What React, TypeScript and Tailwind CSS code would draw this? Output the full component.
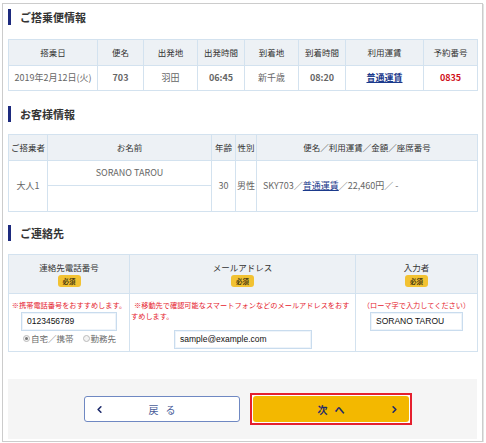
import React from 'react';
import { ChevronLeft, ChevronRight } from 'lucide-react';

const jp = "font-['Noto_Sans_CJK_JP',sans-serif]";
const cellBorder = 'border border-[#d3e2ef]';
const th = `${cellBorder} bg-[#edf1f5] text-center align-middle text-[8.5px] font-normal text-[#333] p-0`;
const td = `${cellBorder} bg-white text-center align-middle text-[9px] text-[#666] p-0`;

const SectionTitle: React.FC<{ label: string }> = ({ label }) => (
  <div className="flex items-center h-[16px] gap-[9px]">
    <span className="w-[3px] h-[16px] bg-[#1d2a7e]" />
    <h2 className="text-[11px] font-bold text-[#333] leading-none">{label}</h2>
  </div>
);

const Required = () => (
  <span className="inline-block rounded-[3px] bg-[#f2c232] px-[5px] text-[6.5px] font-bold leading-[12px] text-[#4a3a10]">
    必須
  </span>
);

const Radio: React.FC<{ checked?: boolean; label: string }> = ({ checked, label }) => (
  <span className="flex items-center gap-[1px]">
    <span className="flex items-center justify-center w-[7px] h-[7px] rounded-full border border-[#bbb] bg-[#f3f3f3]">
      {checked && <span className="w-[3px] h-[3px] rounded-full bg-[#777]" />}
    </span>
    <span>{label}</span>
  </span>
);

const TextBox: React.FC<{ value: string; w: string }> = ({ value, w }) => (
  <div
    className={`${w} h-[19px] mx-auto border border-[#c9dcee] shadow-[inset_0_0_0_1px_#eef4fa] bg-white text-left pl-[5px] flex items-center font-['Liberation_Sans',sans-serif] text-[8.5px] text-[#111]`}
  >
    {value}
  </div>
);

export default function App() {
  return (
    <div className={`${jp} pt-[3px] pl-[2px]`}>
      <div className="w-[481px] h-[439px] border border-[#cccccc] shadow-[1px_1px_0_#e4e4e4] bg-white px-[5px] pt-[5px]">
        <SectionTitle label="ご搭乗便情報" />
        <table className="mt-[14px] w-[469px] table-fixed border-collapse">
          <colgroup>
            <col className="w-[89px]" />
            <col className="w-[46px]" />
            <col className="w-[54px]" />
            <col className="w-[47px]" />
            <col className="w-[54px]" />
            <col className="w-[47px]" />
            <col className="w-[78px]" />
            <col className="w-[54px]" />
          </colgroup>
          <thead>
            <tr className="h-[26px]">
              {['搭乗日', '便名', '出発地', '出発時間', '到着地', '到着時間', '利用運賃', '予約番号'].map(h => (
                <th key={h} className={th}>{h}</th>
              ))}
            </tr>
          </thead>
          <tbody>
            <tr className="h-[25px]">
              <td className={td}>2019年2月12日(火)</td>
              <td className={`${td} font-bold text-[#333]`}>703</td>
              <td className={td}>羽田</td>
              <td className={`${td} font-bold text-[#333]`}>06:45</td>
              <td className={td}>新千歳</td>
              <td className={`${td} font-bold text-[#333]`}>08:20</td>
              <td className={`${td} font-bold`}>
                <a className="text-[#1b3a8c] underline">普通運賃</a>
              </td>
              <td className={`${td} font-bold text-[#d0101b]`}>0835</td>
            </tr>
          </tbody>
        </table>

        <div className="mt-[15px]">
          <SectionTitle label="お客様情報" />
        </div>
        <table className="mt-[12px] w-[469px] table-fixed border-collapse">
          <colgroup>
            <col className="w-[39px]" />
            <col className="w-[164px]" />
            <col className="w-[24px]" />
            <col className="w-[21px]" />
            <col className="w-[221px]" />
          </colgroup>
          <thead>
            <tr className="h-[26px]">
              <th className={th}>ご搭乗者</th>
              <th className={th}>お名前</th>
              <th className={th}>年齢</th>
              <th className={th}>性別</th>
              <th className={th}>便名／利用運賃／金額／座席番号</th>
            </tr>
          </thead>
          <tbody>
            <tr className="h-[25px]">
              <td rowSpan={2} className={td}>大人1</td>
              <td className={td}>SORANO TAROU</td>
              <td rowSpan={2} className={td}>30</td>
              <td rowSpan={2} className={td}>男性</td>
              <td rowSpan={2} className={`${td} text-left pl-[6px]`}>
                SKY703／<a className="text-[#1b3a8c] underline">普通運賃</a>／22,460円／ -
              </td>
            </tr>
            <tr className="h-[26px]">
              <td className={td} />
            </tr>
          </tbody>
        </table>

        <div className="mt-[13px]">
          <SectionTitle label="ご連絡先" />
        </div>
        <table className="mt-[13px] w-[469px] table-fixed border-collapse">
          <colgroup>
            <col className="w-[121px]" />
            <col className="w-[226px]" />
            <col className="w-[122px]" />
          </colgroup>
          <thead>
            <tr className="h-[39px]">
              {['連絡先電話番号', 'メールアドレス', '入力者'].map(h => (
                <th key={h} className={th}>
                  <div className="flex flex-col items-center gap-[3px] pt-[2px]">
                    <span className="leading-none">{h}</span>
                    <Required />
                  </div>
                </th>
              ))}
            </tr>
          </thead>
          <tbody className="text-[7.2px] text-[#e5222e]">
            <tr className="h-[58px]">
              <td className={`${cellBorder} align-top p-0 pt-[6px]`}>
                <p className="text-center leading-[11px]">※携帯電話番号をおすすめします。</p>
                <div className="mt-[1px]">
                  <TextBox value="0123456789" w="w-[96px]" />
                </div>
                <div className="mt-[1px] ml-[14px] flex items-center gap-[9px] text-[8.5px] leading-[12px] text-[#6a6a6a]">
                  <Radio checked label="自宅／携帯" />
                  <Radio label="勤務先" />
                </div>
              </td>
              <td className={`${cellBorder} align-top p-0 pt-[6px] pl-[1px]`}>
                <p className="text-left leading-[11px] indent-[3px]">
                  ※移動先で確認可能なスマートフォンなどのメールアドレスをおすすめします。
                </p>
                <div className="mt-[8px]">
                  <TextBox value="sample@example.com" w="w-[138px]" />
                </div>
              </td>
              <td className={`${cellBorder} align-top p-0 pt-[6px]`}>
                <p className="text-center leading-[11px]">（ローマ字で入力してください）</p>
                <div className="mt-[1px]">
                  <TextBox value="SORANO TAROU" w="w-[93px]" />
                </div>
              </td>
            </tr>
          </tbody>
        </table>

        <div className="mt-[27px] h-[60px] bg-[#f5f5f5] flex items-center justify-center gap-[10px] pl-[11px]">
          <button className="relative w-[156px] h-[26px] rounded-[3px] border border-[#6f88c2] bg-white flex items-center justify-center gap-[7px] text-[10px] text-[#4a5d99]">
            <ChevronLeft size={11} strokeWidth={3.5} className="absolute left-[9px] text-[#1d2a6b]" />
            <span>戻</span>
            <span>る</span>
          </button>
          {/* highlighted next step */}
          <div className="border-2 border-[#e5202e] bg-white p-[1px]">
            <button className="relative w-[156px] h-[26px] rounded-[3px] bg-[#f3b800] flex items-center justify-center gap-[7px] text-[10px] font-bold text-[#1d2a6b]">
              <span>次</span>
              <span>へ</span>
              <ChevronRight size={11} strokeWidth={3.5} className="absolute right-[9px]" />
            </button>
          </div>
        </div>
      </div>
    </div>
  );
}
